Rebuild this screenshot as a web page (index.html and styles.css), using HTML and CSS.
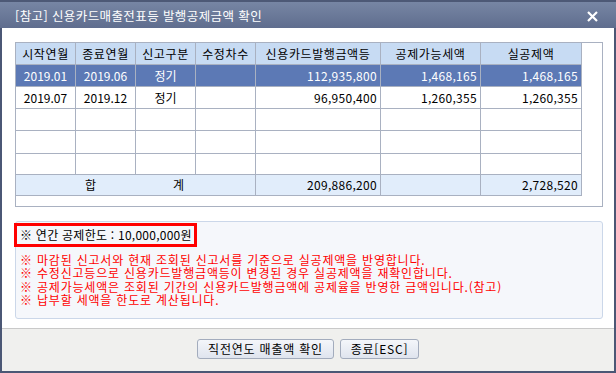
FILE: index.html
```html
<!DOCTYPE html>
<html lang="ko">
<head>
<meta charset="utf-8">
<title>발행공제금액 확인</title>
<link rel="stylesheet" href="styles.css">
</head>
<body>
<div class="win">
  <div class="titlebar">
    <span class="title">[참고] 신용카드매출전표등 발행공제금액 확인</span>
    <svg class="close" width="11" height="11" viewBox="0 0 11 11"><path d="M1 1L10 10M10 1L1 10" stroke="#fff" stroke-width="2.2" fill="none"/></svg>
  </div>
  <div class="content">
    <div class="gridbox">
      <table class="grid">
        <colgroup>
          <col class="c60"><col class="c60"><col class="c60"><col class="c60"><col class="c125"><col class="c100"><col class="c101">
        </colgroup>
        <thead>
          <tr class="hdr"><th>시작연월</th><th>종료연월</th><th>신고구분</th><th>수정차수</th><th>신용카드발행금액등</th><th>공제가능세액</th><th>실공제액</th></tr>
        </thead>
        <tbody>
          <tr class="sel"><td class="c">2019.01</td><td class="c">2019.06</td><td class="c">정기</td><td></td><td class="r">112,935,800</td><td class="r">1,468,165</td><td class="r">1,468,165</td></tr>
          <tr><td class="c">2019.07</td><td class="c">2019.12</td><td class="c">정기</td><td></td><td class="r">96,950,400</td><td class="r">1,260,355</td><td class="r">1,260,355</td></tr>
          <tr><td></td><td></td><td></td><td></td><td></td><td></td><td></td></tr>
          <tr class="tall"><td></td><td></td><td></td><td></td><td></td><td></td><td></td></tr>
          <tr class="short"><td></td><td></td><td></td><td></td><td></td><td></td><td></td></tr>
          <tr class="total"><td colspan="4" class="sum"><span>합</span><span>계</span></td><td class="r">209,886,200</td><td></td><td class="r">2,728,520</td></tr>
        </tbody>
      </table>
    </div>
    <div class="info">
      <div class="limit">※ 연간 공제한도 : 10,000,000원</div>
      <ul class="notes">
        <li>※ 마감된 신고서와 현재 조회된 신고서를 기준으로 실공제액을 반영합니다.</li>
        <li>※ 수정신고등으로 신용카드발행금액등이 변경된 경우 실공제액을 재확인합니다.</li>
        <li>※ 공제가능세액은 조회된 기간의 신용카드발행금액에 공제율을 반영한 금액입니다.(참고)</li>
        <li>※ 납부할 세액을 한도로 계산됩니다.</li>
      </ul>
    </div>
  </div>
  <div class="footer">
    <button class="btn wide">직전연도 매출액 확인</button>
    <button class="btn">종료[ESC]</button>
  </div>
</div>
</body>
</html>
```

FILE: styles.css
```css
* { box-sizing: border-box; }
html, body { margin: 0; padding: 0; }
body {
  width: 616px;
  height: 373px;
  font-family: "Noto Sans CJK KR", "Noto Sans", sans-serif;
  font-size: 12px;
  color: #000;
  background: #4b5775;
}
.win {
  width: 616px;
  height: 373px;
  display: flex;
  flex-direction: column;
  background: #4b5775;
  padding: 0 2px 2px 2px;
}
.titlebar {
  height: 28px;
  flex: none;
  display: flex;
  align-items: center;
  justify-content: space-between;
  padding: 2px 18px 0 15px;
  margin: 0 -2px;
  border-top: 2px solid #4d5976;
  background: linear-gradient(#7786a4, #5f6d8e);
  color: #fff;
}
.title {
  font-size: 12.5px;
  letter-spacing: 0.4px;
  line-height: 14px;
}
.close { display: block; margin-top: 1px; }
.content {
  flex: 1;
  background: #fff;
  padding: 14px 11px 0 13px;
  border-bottom: 1px solid #c9c9c9;
}
.gridbox {
  height: 165px;
  border: 1px solid #a9b1c1;
}
.grid {
  border-collapse: separate;
  border-spacing: 0;
  table-layout: fixed;
  width: 566px;
}
.c60 { width: 60px; }
.c125 { width: 125px; }
.c100 { width: 100px; }
.c101 { width: 101px; }
.grid th, .grid td {
  border-right: 1px solid #a9b1c1;
  border-bottom: 1px solid #a9b1c1;
  height: 22px;
  padding: 0 3px;
  font-weight: normal;
  white-space: nowrap;
  overflow: hidden;
  line-height: 20px;
}
.grid th:first-child, .grid td:first-child { width: 59px; }
.hdr th {
  background: #c7dbf3;
  text-align: center;
  letter-spacing: 0.6px;
}
.sel td { background: #5c79b5; color: #fff; }
.tall td { height: 23px; }
.short td { height: 21px; }
.c { text-align: center; }
.r { text-align: right; letter-spacing: 0.3px; }
.total td { background: #e1edfb; height: 21px; }
.sum {
  padding: 0 !important;
}
.sum span { display: inline-block; }
.sum span:first-child { margin-left: 69px; }
.sum span:last-child { margin-left: 77px; }
.info {
  margin-top: 14px;
  height: 98px;
  width: 588px;
  background: #f5f7fb;
  border: 1px solid #cbd7e9;
  border-radius: 3px;
  padding: 1px 0 0 0;
}
.limit {
  margin-left: -2px;
  width: 183px;
  height: 24px;
  border: 3px solid #f00;
  padding: 0 0 0 3px;
  line-height: 18px;
  letter-spacing: 0.25px;
  white-space: nowrap;
}
.notes {
  list-style: none;
  margin: 6px 0 0 0;
  padding: 0 0 0 4px;
  color: #f00;
  line-height: 13.3px;
  letter-spacing: 0.8px;
  white-space: nowrap;
}
.footer {
  height: 42px;
  flex: none;
  background: #f0f0ee;
  display: flex;
  justify-content: center;
  align-items: flex-start;
  gap: 6px;
  padding-top: 10px;
}
.btn {
  font-family: "Noto Sans CJK KR", "Noto Sans", sans-serif;
  font-size: 12px;
  letter-spacing: 0.8px;
  height: 20px;
  padding: 0;
  border: 1px solid #a3acbd;
  border-radius: 3px;
  background: linear-gradient(#f4f6fa, #dfe4ee);
  color: #000;
  line-height: 18px;
  width: 79px;
}
.btn.wide { width: 137px; }
```
